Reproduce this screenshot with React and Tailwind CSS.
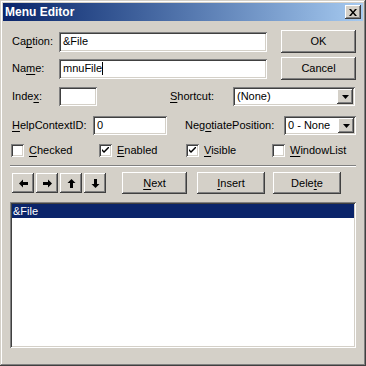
import React from "react";

const raised =
  "bg-[#d4d0c8] shadow-[inset_-1px_-1px_#404040,inset_1px_1px_#ffffff,inset_-2px_-2px_#808080,inset_2px_2px_#d4d0c8]";
const sunken =
  "bg-white shadow-[inset_1px_1px_#808080,inset_-1px_-1px_#ffffff,inset_2px_2px_#404040,inset_-2px_-2px_#d4d0c8]";

const U = ({ children }) => <span className="underline underline-offset-[2px]">{children}</span>;

const Field = ({ className, value, caret }) => (
  <div className={`${sunken} ${className} flex items-center pl-[4px] overflow-hidden`}>
    <span>{value}</span>
    {caret && <span className="w-px h-[13px] bg-black" />}
  </div>
);

const DropArrow = () => (
  <div className={`${raised} w-[16px] h-[15px] flex items-center justify-center`}>
    <svg width="7" height="4" viewBox="0 0 7 4">
      <path d="M0 0h7L3.5 4z" fill="#000" />
    </svg>
  </div>
);

const Combo = ({ className, value }) => (
  <div className={`${sunken} ${className} flex items-center pl-[4px] pr-[2px]`}>
    <span className="flex-1">{value}</span>
    <DropArrow />
  </div>
);

const Check = ({ checked, children, className }) => (
  <div className={`flex items-center ${className}`}>
    <div className={`${sunken} w-[13px] h-[13px] flex items-center justify-center`}>
      {checked && (
        <svg width="7" height="7" viewBox="0 0 7 7">
          <path d="M0 2v2l2 2 5-5V-1L2 4z" fill="#000" />
        </svg>
      )}
    </div>
    <span className="ml-[5px]">{children}</span>
  </div>
);

const Btn = ({ children, className }) => (
  <div className={`${raised} ${className} flex items-center justify-center`}>{children}</div>
);

const Arrow = ({ rot }) => (
  <Btn className="w-[22px] h-[20px]">
    <svg width="9" height="9" viewBox="0 0 9 9" style={{ transform: `rotate(${rot}deg)` }}>
      <path d="M0 4.5L4 0.5V3H9V6H4V8.5z" fill="#000" />
    </svg>
  </Btn>
);

export default function App() {
  return (
    <div
      className="w-[366px] h-[366px] bg-[#d4d0c8] p-[3px] text-[11px] leading-none text-black shadow-[inset_-1px_-1px_#404040,inset_1px_1px_#d4d0c8,inset_-2px_-2px_#808080,inset_2px_2px_#ffffff]"
      style={{ fontFamily: '"Liberation Sans", Arial, sans-serif' }}
    >
      {/* title bar */}
      <div className="h-[18px] flex items-center pl-[2px] pr-[2px] bg-gradient-to-r from-[#0a246a] to-[#a6caf0]">
        <span className="text-white font-bold text-[12px]">Menu Editor</span>
        <Btn className="ml-auto w-[16px] h-[14px]">
          <svg width="8" height="7" viewBox="0 0 8 7">
            <path d="M0 0h2l2 2.5L6 0h2L5 3.5 8 7H6L4 4.5 2 7H0l3-3.5z" fill="#000" />
          </svg>
        </Btn>
      </div>

      <div className="pl-[7px] pr-[7px] w-[360px]">
        {/* caption */}
        <div className="mt-[9px] flex items-center h-[23px]">
          <span className="w-[49px] pl-[2px]">
            Ca<U>p</U>tion:
          </span>
          <Field className="w-[208px] h-[20px]" value="&File" />
          <Btn className="ml-auto w-[75px] h-[23px]">OK</Btn>
        </div>

        {/* name */}
        <div className="mt-[4px] flex items-center h-[23px]">
          <span className="w-[49px] pl-[2px]">
            Na<U>m</U>e:
          </span>
          <Field className="w-[208px] h-[20px]" value="mnuFile" caret />
          <Btn className="ml-auto w-[75px] h-[23px]">Cancel</Btn>
        </div>

        {/* index / shortcut */}
        <div className="mt-[7px] flex items-center h-[19px]">
          <span className="w-[49px] pl-[2px]">
            Inde<U>x</U>:
          </span>
          <Field className="w-[38px] h-[19px]" value="" />
          <span className="ml-[73px] w-[63px]">
            <U>S</U>hortcut:
          </span>
          <Combo className="w-[122px] h-[19px]" value="(None)" />
        </div>

        {/* help / negotiate */}
        <div className="mt-[10px] flex items-center h-[19px]">
          <span className="w-[83px] pl-[2px]">
            <U>H</U>elpContextID:
          </span>
          <Field className="w-[74px] h-[19px]" value="0" />
          <span className="ml-[18px] w-[99px]">
            Neg<U>o</U>tiatePosition:
          </span>
          <Combo className="w-[72px] h-[19px]" value="0 - None" />
        </div>

        {/* checkboxes */}
        <div className="mt-[9px] flex items-center h-[13px] pl-[1px]">
          <Check className="w-[88px]">
            <U>C</U>hecked
          </Check>
          <Check className="w-[87px]" checked>
            <U>E</U>nabled
          </Check>
          <Check className="w-[86px]" checked>
            <U>V</U>isible
          </Check>
          <Check>
            <U>W</U>indowList
          </Check>
        </div>

        {/* separator */}
        <div className="mt-[8px] h-[2px] border-t border-t-[#808080] border-b border-b-white" />

        {/* action row */}
        <div className="mt-[5px] flex items-center h-[22px]">
          <div className="flex gap-[2px] pl-[2px]">
            <Arrow rot={0} />
            <Arrow rot={180} />
            <Arrow rot={90} />
            <Arrow rot={270} />
          </div>
          <Btn className="ml-[16px] w-[65px] h-[22px]">
            <U>N</U>ext
          </Btn>
          <Btn className="ml-[10px] w-[68px] h-[22px]">
            <U>I</U>nsert
          </Btn>
          <Btn className="ml-[8px] w-[68px] h-[22px]">
            Dele<U>t</U>e
          </Btn>
        </div>

        {/* list */}
        <div className={`${sunken} mt-[8px] h-[146px] p-[2px]`}>
          <div className="h-[14px] bg-[#0a246a] text-white flex items-center pl-[1px]">&File</div>
        </div>
      </div>
    </div>
  );
}
